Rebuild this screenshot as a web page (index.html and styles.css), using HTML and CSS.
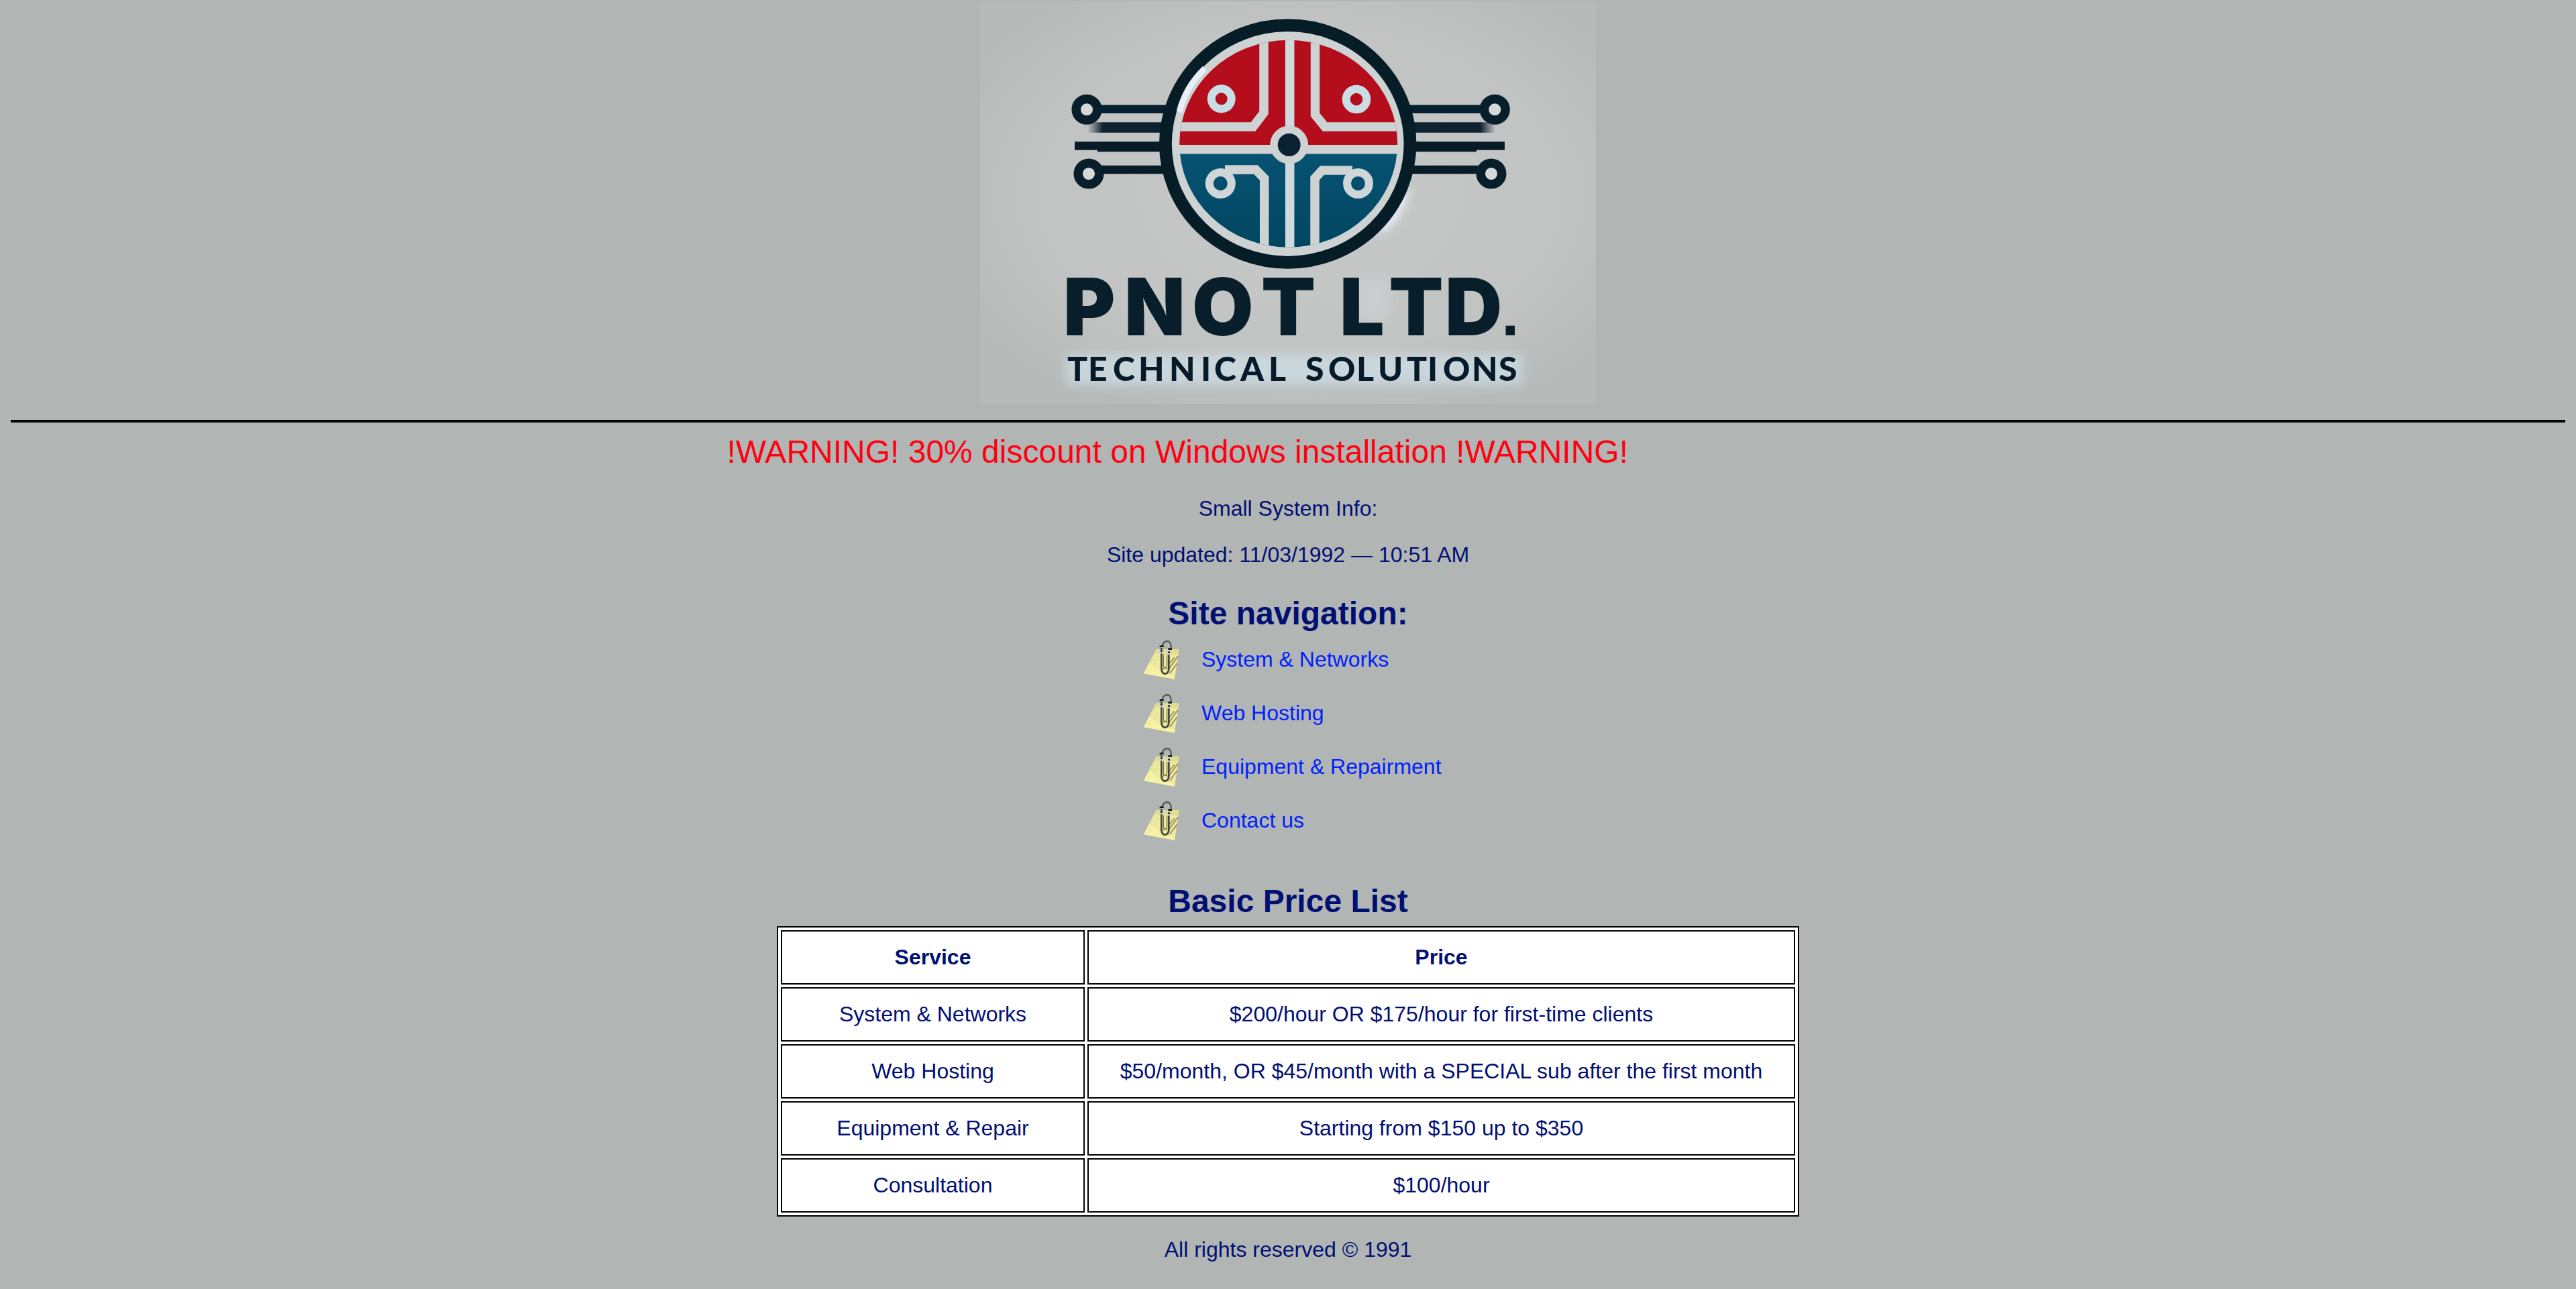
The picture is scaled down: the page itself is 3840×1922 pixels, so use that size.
FILE: index.html
```html
<!DOCTYPE html>
<html lang="en">
<head>
<meta charset="utf-8">
<title>PNOT LTD. Technical Solutions</title>
<link rel="stylesheet" href="styles.css">
</head>
<body>
<svg width="0" height="0" class="symbols" aria-hidden="true">
  <symbol id="clip" viewBox="36 30 180 195">
    <path d="M100 82L203 82L183 215L45 190Z" fill="#eee9a0"/>
    <path d="M100 82L203 82L199 104L92 100Z" fill="#e2dc8e"/>
    <path d="M45 190L70 140L130 190L183 200V215Z" fill="#f6f1a4"/>
    <path d="M92 104L75 150M106 110L92 160M78 162L62 184" stroke="#d8c880" stroke-width="3" stroke-dasharray="5 6" fill="none"/>
    <path d="M160 165L198 112M162 188L194 145M160 145L182 118" stroke="#8f8a58" stroke-width="5" fill="none"/>
    <path d="M124 75V170Q126 191 140 191Q156 189 157 170V104" stroke="#45453d" stroke-width="8" fill="none"/>
    <path d="M133 104V156Q136 168 143 165Q150 162 149 150V106" stroke="#6f6e55" stroke-width="4" fill="none"/>
    <path d="M130 172Q140 155 152 170" stroke="#77754f" stroke-width="4" fill="none"/>
    <path d="M127 66Q133 45 151 45Q168 47 167 78" stroke="#5a5e5d" stroke-width="7" fill="none"/>
    <ellipse cx="124" cy="92" rx="11" ry="8" fill="#d3d6d8"/>
    <ellipse cx="156" cy="98" rx="11" ry="8" fill="#d3d6d8"/>
    <circle cx="124" cy="89" r="5" fill="#26292a"/>
    <circle cx="158" cy="95" r="5" fill="#26292a"/>
    <path d="M116 69L134 67M154 80L171 80" stroke="#16191a" stroke-width="8"/>
  </symbol>
</svg>

<header>
<svg class="logo" viewBox="0 0 918 600" role="img">
  <defs>
    <radialGradient id="paper" cx=".52" cy=".48" r=".62">
      <stop offset="0" stop-color="#c6c9c8"/>
      <stop offset=".65" stop-color="#c1c4c3"/>
      <stop offset="1" stop-color="#b6bab8"/>
    </radialGradient>
    <linearGradient id="sea" x1="0" y1="0" x2="0" y2="1">
      <stop offset="0" stop-color="#075272"/>
      <stop offset="1" stop-color="#004560"/>
    </linearGradient>
    <linearGradient id="fadeL"><stop offset="0" stop-color="#10222f" stop-opacity="0"/><stop offset=".2" stop-color="#10222f"/></linearGradient>
    <linearGradient id="fadeR"><stop offset=".82" stop-color="#10222f"/><stop offset="1" stop-color="#10222f" stop-opacity="0"/></linearGradient>
    <filter id="soft" x="-20%" y="-50%" width="140%" height="200%"><feGaussianBlur stdDeviation="8"/></filter>
    <clipPath id="disc"><ellipse cx="459.7" cy="212.3" rx="162.5" ry="154.5"/></clipPath>
  </defs>
  <rect width="918" height="600" fill="url(#paper)"/>
  <g filter="url(#soft)">
    <rect x="128" y="526" width="680" height="46" fill="#ccdde4" opacity=".75"/>
    <rect x="562" y="412" width="50" height="65" fill="#d3d9dc" opacity=".4"/>
    <path d="M640 275Q630 325 598 345L570 320Z" fill="#eef3fb"/>
  </g>
  <!-- circuit leads -->
  <g fill="none" stroke="#081c28" stroke-width="12.4">
    <path d="M178 160.8H285M748 160.8H635" stroke="#07202f"/>
    <path d="M178 251H285M745 251H635"/>
    <path d="M141 215.5H272M782 215.5H645"/>
    <path d="M175 217H275M740 217H645" stroke-width="14.500"/>
  </g>
  <rect x="160" y="180.3" width="115" height="15.5" fill="url(#fadeL)"/>
  <rect x="645" y="180.3" width="123" height="15.5" fill="url(#fadeR)"/>
  <g fill="#d5d9d9" stroke="#081e2b" stroke-width="13.5">
    <circle cx="159" cy="161.3" r="15.8"/>
    <circle cx="162" cy="257" r="15.8"/>
    <circle cx="767.3" cy="161.3" r="15.8"/>
    <circle cx="762" cy="257" r="15.8"/>
  </g>
  <!-- badge -->
  <ellipse cx="458.7" cy="212.5" rx="182.3" ry="176.8" fill="#cdd2d2" stroke="#061c27" stroke-width="18.8"/>
  <path d="M297 165Q306 128 335 100" fill="none" stroke="#e9eef8" stroke-width="9"/>
  <g clip-path="url(#disc)">
    <rect x="290" y="50" width="340" height="164" fill="#b40d1c"/>
    <rect x="290" y="227.5" width="340" height="150" fill="url(#sea)"/>
    <g fill="none" stroke="#cdd3d3" stroke-width="13.5">
      <path d="M290 187H407L423 166V50"/>
      <path d="M630 187H514L499.5 169V50"/>
      <path d="M365 251H411L423.7 264V380"/>
      <path d="M555 252H510L499 264V380"/>
      <path d="M461.7 50V380" stroke="#cfdade"/>
    </g>
  </g>
  <g fill="none" stroke="#c9dde4" stroke-width="12">
    <circle cx="359.7" cy="145.3" r="15"/>
    <circle cx="561" cy="146" r="15.3"/>
    <circle cx="358.3" cy="271.5" r="16.5" stroke="#ced6d8"/>
    <circle cx="563.5" cy="271.5" r="16.5" stroke="#ced6d8"/>
  </g>
  <circle cx="460.7" cy="214" r="22.7" fill="#0a2134" stroke="#cdd3d3" stroke-width="11.5"/>
  <!-- wordmark -->
  <text class="brand" y="498" x="124 215 316 419 536 609.500 693">PNOTLTD</text>
  <text class="brand dot" y="498" x="777">.</text>
  <text class="tagline" y="566" x="130 161 198 236 282 329 349 388 430 485 519 561 593 636 667 690 733 773">TECHNICALSOLUTIONS</text>
</svg>
</header>
<hr class="rule">
<p class="warning">!WARNING! 30% discount on Windows installation !WARNING!</p>
<p class="info">Small System Info:</p>
<p class="info">Site updated: 11/03/1992 — 10:51 AM</p>

<h2 class="heading">Site navigation:</h2>
<ul class="nav">
  <li><svg class="clip"><use href="#clip"/></svg><a>System &amp; Networks</a></li>
  <li><svg class="clip"><use href="#clip"/></svg><a>Web Hosting</a></li>
  <li><svg class="clip"><use href="#clip"/></svg><a>Equipment &amp; Repairment</a></li>
  <li><svg class="clip"><use href="#clip"/></svg><a>Contact us</a></li>
</ul>

<h2 class="heading">Basic Price List</h2>
<table class="prices">
  <colgroup><col class="service"><col class="price"></colgroup>
  <tr><th>Service</th><th>Price</th></tr>
  <tr><td>System &amp; Networks</td><td>$200/hour OR $175/hour for first-time clients</td></tr>
  <tr><td>Web Hosting</td><td>$50/month, OR $45/month with a SPECIAL sub after the first month</td></tr>
  <tr><td>Equipment &amp; Repair</td><td>Starting from $150 up to $350</td></tr>
  <tr><td>Consultation</td><td>$100/hour</td></tr>
</table>
<footer class="footer">All rights reserved © 1991</footer>
</body>
</html>
```
FILE: styles.css
```css
body {
  margin: 0;
  padding: 2px 16px 0;
  background: #b1b5b4;
  color: #000f73;
  font: 32px/37px "Liberation Sans", Arial, sans-serif;
  text-align: center;
  overflow: hidden;
}
.symbols { position: absolute; }
.logo {
  display: block;
  width: 918px;
  height: 600px;
  margin: 0 auto;
}
.brand {
  font: 900 118px Inter, sans-serif;
  fill: #081f2b;
}
.dot { font: 900 96px "Liberation Sans", Arial, sans-serif; }
.tagline {
  font: 900 50px Lato, sans-serif;
  fill: #061b2a;
}
.rule {
  height: 4px;
  margin: 24px 0 16px;
  border: 0;
  background: #000;
}
.warning {
  margin: 0 0 39px;
  padding-left: 1067.500px;
  color: #ff0010;
  font-size: 48px;
  line-height: 55px;
  text-align: left;
}
.info { margin: 0 0 32px; }
.heading {
  margin: 0;
  font-size: 48px;
  line-height: 55px;
}
.info + .heading { margin-top: 41px; }
.nav {
  display: grid;
  grid-auto-rows: 80px;
  width: 436px;
  margin: 1px auto 53px;
  padding: 0;
  list-style: none;
}
.nav li {
  display: flex;
  align-items: center;
  gap: 29px;
}
.nav a { color: #0022ff; white-space: nowrap; }
.clip { width: 60px; height: 65px; }
.prices {
  width: 1524px;
  margin: 10px auto 31px;
  table-layout: fixed;
  border: 2px solid #000;
  border-spacing: 4px;
  border-collapse: separate;
  background: #fff;
}
.service { width: 453px; }
.price { width: 1055px; }
.prices th, .prices td {
  padding: 20px 0;
  border: 2px solid #000;
}
```
